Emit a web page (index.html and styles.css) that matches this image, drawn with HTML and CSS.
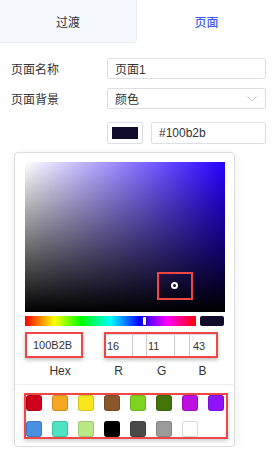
FILE: index.html
```html
<!DOCTYPE html>
<html lang="zh">
<head>
    <meta charset="UTF-8">
    <meta name="viewport" content="width=device-width, initial-scale=1.0">
    <title>页面设置</title>
    <link rel="stylesheet" href="styles.css">
</head>
<body>
    <div class="tabs">
        <div class="tab">过渡</div>
        <div class="tab active">页面</div>
    </div>
    <div class="form">
        <div class="row">
            <label class="label">页面名称</label>
            <div class="input">页面1</div>
        </div>
        <div class="row row-select">
            <label class="label">页面背景</label>
            <div class="input select">
                <span>颜色</span>
                <svg class="chevron" width="10" height="6" viewBox="0 0 10 6"><path d="M0.5 0.5 L5 5 L9.5 0.5" fill="none" stroke="#c0c4cc" stroke-width="1"/></svg>
            </div>
        </div>
        <div class="row row-color">
            <span class="label"></span>
            <div class="swatch-box"><div class="swatch-fill"></div></div>
            <div class="input hex-input">#100b2b</div>
        </div>
    </div>
    <div class="picker">
        <div class="saturation">
            <div class="sat-mark">
                <div class="sat-cursor"></div>
            </div>
        </div>
        <div class="hue-row">
            <div class="hue"><div class="hue-handle"></div></div>
            <div class="preview"></div>
        </div>
        <div class="fields">
            <div class="field hex-field">100B2B</div>
            <div class="field rgb-field">
                <div class="cell c1">16</div>
                <div class="cell gap1"></div>
                <div class="cell c2">11</div>
                <div class="cell gap2"></div>
                <div class="cell c3">43</div>
            </div>
        </div>
        <div class="field-labels">
            <span class="lbl-hex">Hex</span>
            <span class="lbl-r">R</span>
            <span class="lbl-g">G</span>
            <span class="lbl-b">B</span>
        </div>
        <div class="divider"></div>
        <div class="presets">
            <div class="preset" style="background: #d0021b"></div>
            <div class="preset" style="background: #f5a623"></div>
            <div class="preset" style="background: #f8e71c"></div>
            <div class="preset" style="background: #8b572a"></div>
            <div class="preset" style="background: #7ed321"></div>
            <div class="preset" style="background: #417505"></div>
            <div class="preset" style="background: #bd10e0"></div>
            <div class="preset" style="background: #9013fe"></div>
            <div class="preset" style="background: #4a90e2"></div>
            <div class="preset" style="background: #50e3c2"></div>
            <div class="preset" style="background: #b8e986"></div>
            <div class="preset" style="background: #000000"></div>
            <div class="preset" style="background: #4a4a4a"></div>
            <div class="preset" style="background: #9b9b9b"></div>
            <div class="preset" style="background: #ffffff"></div>
        </div>
    </div>
</body>
</html>
```

FILE: styles.css
```css
body {
    margin: 0;
    padding: 0;
    width: 276px;
    background: #fff;
    font-family: "Liberation Sans", "Noto Sans CJK SC", sans-serif;
    font-size: 12px;
    color: #333;
}
.tabs {
    display: flex;
    height: 43px;
}
.tab {
    display: flex;
    align-items: center;
    justify-content: center;
    flex: 1;
    color: #333;
}
.tab:first-child {
    flex: 0 0 137px;
    box-sizing: border-box;
    background: #f5f8fc;
    border-right: 1px solid #e8edf3;
    border-bottom: 1px solid #e8edf3;
    border-bottom-right-radius: 4px;
}
.tab.active {
    color: #3d5cf2;
    font-weight: 500;
}
.form {
    padding: 15px 10px 0 11px;
}
.row {
    display: flex;
    align-items: center;
    margin-bottom: 9px;
}
.row-select {
    margin-bottom: 13px;
}
.label {
    width: 96px;
    color: #333;
}
.input {
    box-sizing: border-box;
    width: 159px;
    height: 21px;
    padding: 0 7px;
    border: 1px solid #dcdfe6;
    border-radius: 2px;
    display: flex;
    align-items: center;
    color: #333;
}
.select {
    justify-content: space-between;
}
.chevron {
    margin-right: 1px;
}
.row-color {
    height: 22px;
    margin-bottom: 0;
}
.swatch-box {
    box-sizing: border-box;
    width: 36px;
    height: 22px;
    padding: 4px;
    border: 1px solid #dcdfe6;
    border-radius: 2px;
}
.swatch-fill {
    width: 100%;
    height: 100%;
    background: #100b2b;
}
.hex-input {
    width: 115px;
    height: 22px;
    margin-left: 8px;
}
.picker {
    box-sizing: border-box;
    width: 221px;
    margin: 8px 0 0 14px;
    padding: 9px 10px 7px;
    border: 1px solid #ddd;
    border-radius: 4px;
    background: #fff;
    box-shadow: 0 2px 10px rgba(0, 0, 0, 0.08);
    font-size: 11px;
}
.saturation {
    position: relative;
    width: 200px;
    height: 150px;
    background:
        linear-gradient(to top, #000, rgba(0, 0, 0, 0)),
        linear-gradient(to right, #fff, rgba(255, 255, 255, 0)),
        hsl(249, 100%, 50%);
}
.sat-mark {
    position: absolute;
    left: 132px;
    top: 110px;
    width: 36px;
    height: 28px;
    box-sizing: border-box;
    border: 2px solid #f04646;
}
.sat-cursor {
    position: absolute;
    left: 12px;
    top: 8px;
    width: 3px;
    height: 3px;
    border: 2px solid #fff;
    border-radius: 50%;
}
.hue-row {
    display: flex;
    margin-top: 4px;
    height: 10px;
}
.hue {
    position: relative;
    width: 172px;
    height: 10px;
    background: linear-gradient(to right, #f00 0%, #ff0 17%, #0f0 33%, #0ff 50%, #00f 67%, #f0f 83%, #f00 100%);
}
.hue-handle {
    position: absolute;
    left: 118px;
    top: 1px;
    width: 3px;
    height: 8px;
    background: #fff;
    border-radius: 1px;
    box-shadow: 0 0 2px rgba(0, 0, 0, 0.6);
}
.preview {
    width: 24px;
    height: 10px;
    margin-left: 4px;
    border-radius: 2px;
    background: #100b2b;
}
.fields {
    display: flex;
    margin-top: 6px;
    height: 26px;
}
.field {
    box-sizing: border-box;
    height: 26px;
    border: 2px solid #f04646;
    box-shadow: 0 2px 4px rgba(0, 0, 0, 0.25);
    color: #333;
}
.hex-field {
    width: 58px;
    padding-left: 6px;
    display: flex;
    align-items: center;
}
.rgb-field {
    display: flex;
    width: 114px;
    margin-left: 21px;
}
.cell {
    box-sizing: border-box;
    display: flex;
    align-items: center;
    height: 100%;
    border-left: 1px solid #ccc;
    border-top: 1px solid #ddd;
}
.c1 {
    width: 26px;
    border-left: none;
    padding-left: 1px;
}
.gap1 {
    width: 14px;
}
.c2 {
    width: 28px;
    padding-left: 1px;
}
.gap2 {
    width: 15px;
}
.c3 {
    width: 27px;
    padding-left: 3px;
}
.field-labels {
    display: flex;
    margin-top: 6px;
    line-height: 14px;
    font-size: 12px;
    color: #333;
}
.field-labels span {
    text-align: center;
}
.lbl-hex {
    width: 72px;
}
.lbl-r {
    width: 48px;
}
.lbl-g {
    width: 40px;
}
.lbl-b {
    width: 44px;
}
.divider {
    height: 1px;
    margin: 6px -10px 0;
    background: #eee;
}
.presets {
    box-sizing: border-box;
    display: grid;
    grid-template-columns: repeat(8, 16px);
    gap: 10px;
    width: 204px;
    margin: 8px 0 0 -1px;
    border: 2px solid #f04646;
    box-shadow: 0 2px 4px rgba(0, 0, 0, 0.2);
}
.preset {
    width: 16px;
    height: 16px;
    border-radius: 3px;
    box-shadow: inset 0 0 0 1px rgba(0, 0, 0, 0.15);
}
```
